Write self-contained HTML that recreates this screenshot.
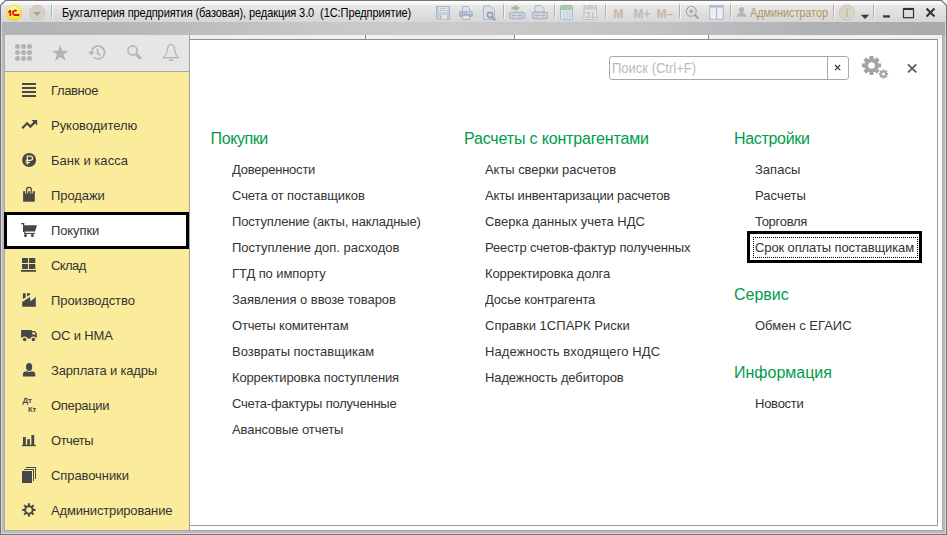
<!DOCTYPE html>
<html><head><meta charset="utf-8">
<style>
*{box-sizing:border-box;margin:0;padding:0}
html,body{width:947px;height:535px;overflow:hidden;background:#fff;font-family:"Liberation Sans",sans-serif}
.abs{position:absolute}
#frame{position:absolute;left:0;top:0;width:947px;height:535px;background:#747474;clip-path:polygon(5px 0,942px 0,947px 5px,947px 535px,0 535px,0 5px)}
#flight{position:absolute;left:1px;top:1px;width:945px;height:533px;background:#d8d8d8;clip-path:polygon(5px 0,940px 0,945px 5px,945px 533px,0 533px,0 5px)}
#fmid{position:absolute;left:2px;top:22px;width:943px;height:511px;background:#bbbbbd}
#title{position:absolute;left:1px;top:1px;width:945px;height:21px;clip-path:polygon(5px 0,940px 0,945px 5px,945px 21px,0 21px,0 5px);background:linear-gradient(#fdfdfd,#f8f8f8 2.5px,#e8e8e8 4.5px,#dfdfdf 12px,#d7d7d9)}
#band{position:absolute;left:2px;top:22px;width:943px;height:13px;background:linear-gradient(90deg,#b3b4b6 0,#b6b7b9 120px,#c8c8c9 330px,#cbcbcb 450px,#c4c4c6 640px,#b2b3b5 800px,#a9aaac 943px)}
#side{position:absolute;left:4px;top:35px;width:186px;height:496px;border-left:1px solid #a8a8ae;border-right:1px solid #a0a0a0;border-bottom:1px solid #a8a8aa;background:#fbec9c}
#sidehead{position:absolute;left:0;top:0;width:184px;height:37px;background:#e6e6e6;border-bottom:1px solid #a6a6a6}
#content{position:absolute;left:190px;top:35px;width:753px;height:496px;background:#fff;border-right:1px solid #a8a8a8;border-bottom:1px solid #a8a8aa}
#strip{position:absolute;left:0;top:0;width:752px;height:4px;background:#f0f0f0}
#cbox{position:absolute;left:0;top:4px;width:748px;height:487px;border-top:1px solid #8e8e8e;border-right:1px solid #9a9a9a;border-bottom:1px solid #9a9a9a;background:#fff}
.sep{position:absolute;top:0;width:1px;height:4px;background:#8a8a8a}
.si{position:absolute;left:0;width:184px;height:35px}
.si .t{position:absolute;left:46px;top:11px;font-size:13px;line-height:15px;color:#333;white-space:nowrap;transform:scaleY(1.05);transform-origin:0 12px}
.si svg{position:absolute;left:15px;top:9px}
.h{position:absolute;font-size:16px;line-height:18px;color:#009b4c;white-space:nowrap}
.it{position:absolute;font-size:13px;line-height:15px;color:#333;white-space:nowrap;transform:scaleY(1.05);transform-origin:0 12px}
</style></head><body>
<div id="frame"></div>
<div id="flight"></div>
<div id="fmid"></div>
<div id="title"></div>
<div id="band"></div>

<svg class="abs" style="left:0;top:0" width="947" height="22" viewBox="0 0 947 22">
 <defs>
  <radialGradient id="yel" cx="0.45" cy="0.3" r="0.75"><stop offset="0" stop-color="#ffffb0"/><stop offset="0.55" stop-color="#fff04a"/><stop offset="1" stop-color="#f2d200"/></radialGradient>
  <linearGradient id="sepg" x1="0" y1="0" x2="0" y2="1"><stop offset="0" stop-color="#a0a0a0" stop-opacity="0.2"/><stop offset="0.2" stop-color="#b0b0b0"/><stop offset="0.8" stop-color="#b0b0b0"/><stop offset="1" stop-color="#a0a0a0" stop-opacity="0.2"/></linearGradient>
 </defs>
 <!-- 1C logo -->
 <circle cx="14" cy="12.9" r="7.6" fill="url(#yel)" stroke="#e0cf5a" stroke-width="0.6"/>
  <path d="M8 11.6 L9.6 9.9 L11.2 9.9 L11.2 15.9 L9.4 15.9 L9.4 12.3 L8.4 12.9 Z" fill="#e4100e"/>
 <path d="M16.6 11.1 A2.25 2.25 0 1 0 14.7 15 L19.3 15" fill="none" stroke="#e4100e" stroke-width="1.85"/>
 <!-- dropdown circle -->
 <circle cx="37.1" cy="12.9" r="7.6" fill="#d6d0c4" stroke="#c6c0b3" stroke-width="0.7"/>
 <path d="M33.2 12 L40.8 12 L37 15.9 Z" fill="#a9a397"/>
 <!-- separators -->
 <g fill="url(#sepg)">
  <rect x="51" y="3" width="1" height="16"/>
  <rect x="503" y="3" width="1" height="16"/>
  <rect x="554" y="3" width="1" height="16"/>
  <rect x="605" y="3" width="1" height="16"/>
  <rect x="679" y="3" width="1" height="16"/>
  <rect x="730" y="3" width="1" height="16"/>
  <rect x="833" y="3" width="1" height="16"/>
  <rect x="873" y="3" width="1" height="16"/>
 </g>
 <g fill="#fafafa" opacity="0.8">
  <rect x="52" y="3" width="1" height="16"/><rect x="504" y="3" width="1" height="16"/><rect x="555" y="3" width="1" height="16"/><rect x="606" y="3" width="1" height="16"/><rect x="680" y="3" width="1" height="16"/><rect x="731" y="3" width="1" height="16"/><rect x="834" y="3" width="1" height="16"/><rect x="874" y="3" width="1" height="16"/>
 </g>
 <!-- save -->
 <g>
  <path d="M436.5 6.5 L449.5 6.5 L449.5 19.5 L437.5 19.5 L436.5 18.5 Z" fill="#c5cfda" stroke="#a9b6c6" stroke-width="1"/>
  <rect x="439" y="7" width="8" height="5" fill="#e6e8e6"/>
  <rect x="440" y="8.2" width="6" height="0.9" fill="#b0bccb"/>
  <rect x="440" y="10.1" width="6" height="0.9" fill="#b0bccb"/>
  <rect x="439" y="14.5" width="8" height="5" fill="#e2e8e0" stroke="#b8c4d0" stroke-width="0.6"/>
  <rect x="440" y="15.5" width="1.6" height="4" fill="#a9b6c6"/>
 </g>
 <!-- print -->
 <g>
  <path d="M462.5 6.5 L467.5 6.5 L469.5 8.5 L469.5 11.5 L462.5 11.5 Z" fill="#e2e2e2" stroke="#a9b7c8" stroke-width="1"/>
  <rect x="459" y="11" width="14" height="6" rx="1.5" fill="#a9b7c8"/>
  <rect x="460.5" y="12.5" width="11" height="1" fill="#bcc8d4"/>
  <rect x="467.6" y="12.2" width="1.2" height="1.2" fill="#eef2f6"/><rect x="469.8" y="12.2" width="1.2" height="1.2" fill="#eef2f6"/>
  <rect x="462.5" y="15.5" width="7" height="4" fill="#e2e2e2" stroke="#a9b7c8" stroke-width="1"/>
 </g>
 <!-- preview -->
 <g>
  <path d="M483.5 6 L490 6 L494.5 10 L494.5 19.5 L483.5 19.5 Z" fill="#e0e0e0" stroke="#a9b7c8" stroke-width="1"/>
  <circle cx="490" cy="15" r="2.6" fill="none" stroke="#8f9eb0" stroke-width="1.6"/>
  <path d="M492 17 L495.5 20.3" stroke="#8f9eb0" stroke-width="1.8"/>
 </g>
 <!-- chain with green arrow -->
 <g>
  <path d="M511.5 8 L516 8" stroke="#9fb79c" stroke-width="2.6"/><path d="M515 4.8 L520 8 L515 11.2 Z" fill="#9fb79c"/>
  <rect x="509.5" y="12.5" width="15" height="6" rx="2" fill="none" stroke="#a9b7c8" stroke-width="1.4"/>
  <rect x="511.5" y="14.5" width="3.5" height="2" fill="#a9b7c8"/>
  <rect x="519" y="14.5" width="3.5" height="2" fill="#a9b7c8"/>
  <rect x="515" y="15" width="4" height="1" fill="#a9b7c8"/>
 </g>
 <!-- doc printer -->
 <g>
  <path d="M535 5.5 L541 5.5 L544 8.5 L544 12 L535 12 Z" fill="#e0e0e0" stroke="#a9b7c8" stroke-width="1"/>
  <rect x="532.5" y="12.5" width="15" height="6" rx="2" fill="none" stroke="#a9b7c8" stroke-width="1.4"/>
  <rect x="534.5" y="14.5" width="3.5" height="2" fill="#a9b7c8"/>
  <rect x="542" y="14.5" width="3.5" height="2" fill="#a9b7c8"/>
  <rect x="538" y="15" width="4" height="1" fill="#a9b7c8"/>
 </g>
 <!-- calculator -->
 <g>
  <rect x="560.5" y="5.5" width="12" height="14" rx="1" fill="#dde4ea" stroke="#a9bccf" stroke-width="1"/>
  <rect x="561" y="6" width="11" height="4" fill="#abc9a4"/>
  <g fill="#b8c2cc"><rect x="563" y="11.5" width="1.5" height="1"/><rect x="566" y="11.5" width="1.5" height="1"/><rect x="569" y="11.5" width="1.5" height="1" fill="#d89a9a"/>
  <rect x="563" y="13.5" width="1.5" height="1"/><rect x="566" y="13.5" width="1.5" height="1"/><rect x="569" y="13.5" width="1.5" height="1"/>
  <rect x="563" y="15.5" width="1.5" height="1"/><rect x="566" y="15.5" width="1.5" height="1"/><rect x="569" y="15.5" width="1.5" height="2"/>
  <rect x="563" y="17.5" width="1.5" height="1"/><rect x="566" y="17.5" width="1.5" height="1"/></g>
 </g>
 <!-- calendar -->
 <g>
  <rect x="584" y="5.5" width="12.5" height="14" rx="1" fill="#e2e8ee" stroke="#b0c0d0" stroke-width="1"/>
  <rect x="584.3" y="5.5" width="12" height="4" fill="#d9c7b6"/>
  <rect x="586.5" y="4.8" width="1" height="2" fill="#f4f4f4"/><rect x="593.5" y="4.8" width="1" height="2" fill="#f4f4f4"/>
  <text x="590.3" y="18.2" font-family="Liberation Sans" font-size="9" fill="#a4acb4" text-anchor="middle">31</text>
 </g>
 <!-- M M+ M- -->
 <g font-family="Liberation Sans" font-weight="bold" font-size="12" fill="#c6b7a8">
  <text x="613.5" y="17.8">M</text>
  <text x="633.5" y="17.8">M+</text>
  <text x="656.5" y="17.8">M–</text>
 </g>
 <!-- zoom -->
 <g>
  <circle cx="691.3" cy="11.3" r="5" fill="none" stroke="#a3a3a3" stroke-width="1.1"/>
  <path d="M689 11.3 L693.6 11.3 M691.3 9 L691.3 13.6" stroke="#9a9a9a" stroke-width="1.1"/>
  <path d="M695 15 L698.6 18.6" stroke="#a3a3a3" stroke-width="2"/>
 </g>
 <!-- panel -->
 <g>
  <rect x="709.7" y="5.7" width="13.6" height="13.6" fill="#eceff2" stroke="#aabdd0" stroke-width="1.1"/>
  <rect x="710" y="6" width="13" height="1.6" fill="#aabdd0"/>
  <rect x="716" y="6" width="1.1" height="13" fill="#aabdd0"/>
 </g>
 <!-- user -->
 <g fill="#b4b4b4">
  <ellipse cx="741.6" cy="10" rx="2.6" ry="3"/>
  <path d="M736.8 16.8 C736.8 14 738.5 13 741.6 13 C744.7 13 746.4 14 746.4 16.8 Z"/>
 </g>
 <g transform="translate(750,16.7) scale(1,1.125)"><text x="0" y="0" font-family="Liberation Sans" font-size="11" letter-spacing="-0.1" fill="#b0965a">Администратор</text></g>
 <!-- info -->
 <circle cx="847" cy="12.7" r="7.7" fill="#dad4c7" stroke="#c8c2b2" stroke-width="0.8"/>
 <g fill="#bdbe9f">
  <circle cx="847.2" cy="9" r="1.05"/>
  <path d="M845.6 11.2 L848 11.2 L848 15.8 L848.9 15.8 L848.9 16.8 L845.6 16.8 L845.6 15.8 L846.4 15.8 L846.4 12.2 L845.6 12.2 Z"/>
 </g>
 <path d="M860.8 14.8 L869.2 14.8 L865 19 Z" fill="#3a3a3a"/>
 <!-- window controls -->
 <rect x="883" y="15.3" width="7" height="2.2" fill="#333"/>
 <rect x="903.5" y="8.5" width="10" height="9.2" fill="none" stroke="#333" stroke-width="1.2"/>
 <rect x="903" y="8" width="11" height="2" fill="#333"/>
 <path d="M926.5 8.5 L934.5 16.5 M934.5 8.5 L926.5 16.5" stroke="#333" stroke-width="2"/>
</svg>

<div class="abs" style="left:62px;top:6px;font-size:11px;line-height:13px;color:#000;letter-spacing:-0.076px;white-space:nowrap;transform:scaleY(1.125);transform-origin:0 2px">Бухгалтерия предприятия (базовая), редакция 3.0&nbsp; (1С:Предприятие)</div>

<div id="side">
  <div id="sidehead"></div>
</div>

<div id="content">
  <div id="strip"></div>
  <div class="abs" style="left:325px;top:0;width:193px;height:4px;background:#fff"></div>
  <div class="sep" style="left:175px"></div>
  <div class="sep" style="left:324px"></div>
  <div class="sep" style="left:518px"></div>
  <div id="cbox"></div>
</div>


<!-- search -->
<div class="abs" style="left:609px;top:56px;width:240px;height:24px;border:1px solid #a8a8a8;border-radius:3px;background:#fff"></div>
<div class="abs" style="left:827px;top:57px;width:1px;height:22px;background:#a8a8a8"></div>
<div class="abs" style="left:612px;top:61px;font-size:13px;line-height:15px;color:#bbbbbb;white-space:nowrap;transform:scaleY(1.06);transform-origin:0 12px">Поиск (Ctrl+F)</div>
<svg class="abs" style="left:820px;top:50px" width="120" height="35" viewBox="820 50 120 35">
 <path d="M835 65 L840.2 70.2 M840.2 65 L835 70.2" stroke="#333" stroke-width="1.2"/>
 <g transform="translate(871.5,65.5)" fill="#a4a4a4">
  <circle r="7.2"/>
  <g><rect x="-2" y="-9.5" width="4" height="19"/><rect x="-2" y="-9.5" width="4" height="19" transform="rotate(45)"/><rect x="-2" y="-9.5" width="4" height="19" transform="rotate(90)"/><rect x="-2" y="-9.5" width="4" height="19" transform="rotate(135)"/></g>
  <circle r="3.3" fill="#fff"/>
 </g>
 <g transform="translate(883.5,74)" fill="#a4a4a4">
  <circle r="3.4"/>
  <g><rect x="-1" y="-4.6" width="2" height="9.2"/><rect x="-1" y="-4.6" width="2" height="9.2" transform="rotate(45)"/><rect x="-1" y="-4.6" width="2" height="9.2" transform="rotate(90)"/><rect x="-1" y="-4.6" width="2" height="9.2" transform="rotate(135)"/></g>
  <circle r="1.6" fill="#fff"/>
 </g>
 <path d="M908 64.3 L916.3 72.3 M916.3 64.3 L908 72.3" stroke="#555" stroke-width="1.6"/>
</svg>

<!-- sidebar header icons -->
<svg class="abs" style="left:0;top:35px" width="190" height="37" viewBox="0 35 190 37">
 <g fill="#b3b3b3">
  <circle cx="17.5" cy="46.5" r="2.5"/><circle cx="23.5" cy="46.5" r="2.5"/><circle cx="29.5" cy="46.5" r="2.5"/>
  <circle cx="17.5" cy="52.5" r="2.5"/><circle cx="23.5" cy="52.5" r="2.5"/><circle cx="29.5" cy="52.5" r="2.5"/>
  <circle cx="17.5" cy="58.5" r="2.5"/><circle cx="23.5" cy="58.5" r="2.5"/><circle cx="29.5" cy="58.5" r="2.5"/>
  <path d="M60.3 44.8 L62.3 50.7 L68.5 50.7 L63.6 54.5 L65.6 61 L60.3 57 L55 61 L57 54.5 L52.1 50.7 L58.3 50.7 Z"/>
 </g>
 <g fill="none" stroke="#b3b3b3" stroke-width="1.6">
  <path d="M91.6 52.4 A6.5 6.5 0 1 1 93.5 57"/>
  <path d="M97.6 48.5 L97.6 53.5 L100.3 55.2"/>
  <circle cx="132.6" cy="50.5" r="4.6"/>
 </g>
 <path d="M88 51.8 L94.6 51.8 L91.3 55.6 Z" fill="#b3b3b3"/>
 <path d="M136.3 54.2 L140.8 58.7" stroke="#b3b3b3" stroke-width="3"/>
 <g fill="none" stroke="#b3b3b3" stroke-width="1.2">
  <path d="M171 44.4 C168.7 44.4 167.7 46.6 167.3 50 C166.9 53.4 166.1 55.4 163.8 57.5 L178.2 57.5 C175.9 55.4 175.1 53.4 174.7 50 C174.3 46.6 173.3 44.4 171 44.4 Z"/>
 </g>
 <rect x="163.2" y="57" width="15.6" height="1.3" fill="#b3b3b3"/>
 <path d="M168.4 59.4 L173.6 59.4 C173.3 60.6 172.4 61 171 61 C169.6 61 168.7 60.6 168.4 59.4 Z" fill="#b3b3b3"/>
</svg>

<!-- selected item box -->
<div class="abs" style="left:4px;top:212px;width:185px;height:37px;border:3px solid #000;background:#fff"></div>

<!-- sidebar icons -->
<svg class="abs" style="left:0;top:72px" width="190" height="458" viewBox="0 72 190 458">
 <g fill="#474747">
  <!-- hamburger -->
  <rect x="22" y="83" width="14" height="2"/><rect x="22" y="87" width="14" height="2"/><rect x="22" y="91" width="14" height="2"/><rect x="22" y="95" width="14" height="2"/>
  <!-- ruble -->
  <circle cx="29.1" cy="160" r="7"/>
  <!-- bag -->
  <path d="M23.1 191.2 L34.8 191.2 L34.8 201.7 L23.1 201.7 Z"/>
  <!-- cart -->
  <rect x="21.1" y="223" width="3" height="1.3"/>
  <rect x="23" y="223" width="1.2" height="9"/>
  <path d="M23 225.2 L37 225.2 L35 231.6 L23 231.6 Z"/>
  <rect x="24.2" y="231" width="1" height="2.5"/>
  <rect x="24.2" y="232.9" width="10.8" height="1.1"/>
  <circle cx="25.5" cy="235.5" r="1.5"/><circle cx="32.4" cy="235.5" r="1.5"/>
  <!-- warehouse -->
  <rect x="22" y="258" width="6" height="5"/><rect x="29" y="258" width="6.3" height="5"/>
  <rect x="22" y="264" width="6" height="5"/><rect x="29" y="264" width="6.3" height="5"/>
  <rect x="21" y="270" width="15" height="1.8"/>
  <!-- factory -->
  <path d="M22.2 306.8 L22.2 302 L29.8 297 L30.6 301.2 L35.8 297 L35.8 306.8 Z"/>
  <path d="M22.9 293.2 L25.7 293.2 L25.7 297.4 L22.9 299.1 Z"/><path d="M27 293.2 L30 293.2 L30 294.8 L27 296.6 Z"/>
  <!-- truck -->
  <path d="M21.1 330 L31.7 330 L31.7 331 L34.8 331 L36.8 333.2 L36.8 337.8 L21.1 337.8 Z"/>
  <rect x="27" y="337" width="4" height="1.6"/>
  <circle cx="24.6" cy="339.4" r="2.8" fill="#fbec9c"/><circle cx="33.4" cy="339.4" r="2.8" fill="#fbec9c"/>
  <circle cx="24.6" cy="339.4" r="1.75"/><circle cx="33.4" cy="339.4" r="1.75"/>
  <!-- person -->
  <path d="M22.9 376.6 L22.9 374.4 C22.9 372.2 24.3 371.3 26.8 371.3 L31.4 371.3 C33.9 371.3 35.3 372.2 35.3 374.4 L35.3 376.6 Z"/>
  <ellipse cx="29.1" cy="366.9" rx="3.1" ry="4" stroke="#fbec9c" stroke-width="2" paint-order="stroke"/>
  <!-- bars -->
  <rect x="23" y="437" width="2.8" height="8"/><rect x="27.2" y="439.2" width="2.7" height="5.8"/><rect x="31.4" y="435" width="2.8" height="10"/>
  <rect x="21.8" y="444.8" width="14" height="1.4"/>
  <!-- docs -->
  <rect x="22" y="471" width="10" height="12"/>
  <rect x="24" y="469" width="10" height="1"/><rect x="33" y="469" width="1" height="12"/>
  <rect x="26" y="467" width="10" height="1"/><rect x="35" y="467" width="1" height="12"/>
 </g>
 <!-- ruble sign -->
 <g fill="none" stroke="#fbec9c" stroke-width="1.3">
  <path d="M27.3 164.4 L27.3 156.2 L30.2 156.2 C31.8 156.2 32.6 157 32.6 158.3 C32.6 159.6 31.8 160.4 30.2 160.4 L25.6 160.4"/>
  <path d="M25.6 162.5 L30 162.5"/>
 </g>
 <!-- bag handle -->
 <path d="M26.6 193.6 L26.6 189.6 C26.6 188 27.5 187.4 28.95 187.4 C30.4 187.4 31.3 188 31.3 189.6 L31.3 193.6" fill="none" stroke="#fbec9c" stroke-width="2.9"/>
 <path d="M26.6 193.6 L26.6 189.6 C26.6 188 27.5 187.4 28.95 187.4 C30.4 187.4 31.3 188 31.3 189.6 L31.3 193.6" fill="none" stroke="#474747" stroke-width="1.25"/>
 <!-- trend -->
 <path d="M22.3 128.3 L27.1 123.3 L30.4 126.6 L34.6 122.4" fill="none" stroke="#474747" stroke-width="2.2"/>
 <path d="M31.5 120 L37.1 120 L37.1 125.6 Z" fill="#474747"/>
 <!-- truck window -->
 <path d="M32.3 332.3 L34.5 332.3 L35.7 334.6 L32.3 334.6 Z" fill="#fbec9c"/>
 <!-- Dt Kt -->
 <text x="22.4" y="403.2" font-family="Liberation Sans" font-weight="bold" font-size="8" fill="#474747">Дт</text>
 <text x="27.9" y="411.9" font-family="Liberation Sans" font-weight="bold" font-size="7.6" fill="#474747">Кт</text>
 <!-- gear -->
 <g transform="translate(28.9,509.9)">
  <g fill="#474747">
   <rect x="-1" y="-6.7" width="2" height="13.4"/>
   <rect x="-1" y="-6.7" width="2" height="13.4" transform="rotate(45)"/>
   <rect x="-1" y="-6.7" width="2" height="13.4" transform="rotate(90)"/>
   <rect x="-1" y="-6.7" width="2" height="13.4" transform="rotate(135)"/>
   <circle r="4.7"/>
  </g>
  <circle r="2.75" fill="#fbec9c"/>
 </g>
</svg>

<div class="si" style="left:5px;top:72px"><div class="t" style="letter-spacing:-0.383px">Главное</div></div>
<div class="si" style="left:5px;top:107px"><div class="t" style="letter-spacing:-0.035px">Руководителю</div></div>
<div class="si" style="left:5px;top:142px"><div class="t" style="letter-spacing:0.036px">Банк и касса</div></div>
<div class="si" style="left:5px;top:177px"><div class="t" style="letter-spacing:-0.083px">Продажи</div></div>
<div class="si" style="left:5px;top:212px"><div class="t" style="letter-spacing:-0.1px">Покупки</div></div>
<div class="si" style="left:5px;top:247px"><div class="t" style="letter-spacing:-0.6px">Склад</div></div>
<div class="si" style="left:5px;top:282px"><div class="t" style="letter-spacing:-0.077px">Производство</div></div>
<div class="si" style="left:5px;top:317px"><div class="t" style="letter-spacing:-0.13px">ОС и НМА</div></div>
<div class="si" style="left:5px;top:352px"><div class="t" style="letter-spacing:-0.18px">Зарплата и кадры</div></div>
<div class="si" style="left:5px;top:387px"><div class="t" style="letter-spacing:-0.333px">Операции</div></div>
<div class="si" style="left:5px;top:422px"><div class="t" style="letter-spacing:-0.48px">Отчеты</div></div>
<div class="si" style="left:5px;top:457px"><div class="t" style="letter-spacing:-0.08px">Справочники</div></div>
<div class="si" style="left:5px;top:492px"><div class="t" style="letter-spacing:-0.156px">Администрирование</div></div>

<!-- content texts -->
<div class="h" style="left:210.6px;top:130px;letter-spacing:-0.42px">Покупки</div>
<div class="it" style="left:232px;top:162px;letter-spacing:-0.234px">Доверенности</div>
<div class="it" style="left:232px;top:188px;letter-spacing:-0.095px">Счета от поставщиков</div>
<div class="it" style="left:232px;top:214px;letter-spacing:-0.164px">Поступление (акты, накладные)</div>
<div class="it" style="left:232px;top:240px;letter-spacing:-0.021px">Поступление доп. расходов</div>
<div class="it" style="left:232px;top:266px;letter-spacing:-0.077px">ГТД по импорту</div>
<div class="it" style="left:232px;top:292px;letter-spacing:-0.058px">Заявления о ввозе товаров</div>
<div class="it" style="left:232px;top:318px;letter-spacing:-0.215px">Отчеты комитентам</div>
<div class="it" style="left:232px;top:344px;letter-spacing:-0.016px">Возвраты поставщикам</div>
<div class="it" style="left:232px;top:370px;letter-spacing:-0.139px">Корректировка поступления</div>
<div class="it" style="left:232px;top:396px;letter-spacing:-0.211px">Счета-фактуры полученные</div>
<div class="it" style="left:232px;top:422px;letter-spacing:-0.08px">Авансовые отчеты</div>

<div class="h" style="left:464px;top:130px;letter-spacing:-0.164px">Расчеты с контрагентами</div>
<div class="it" style="left:485px;top:162px;letter-spacing:-0.052px">Акты сверки расчетов</div>
<div class="it" style="left:485px;top:188px;letter-spacing:-0.163px">Акты инвентаризации расчетов</div>
<div class="it" style="left:485px;top:214px;letter-spacing:-0.02px">Сверка данных учета НДС</div>
<div class="it" style="left:485px;top:240px;letter-spacing:-0.127px">Реестр счетов-фактур полученных</div>
<div class="it" style="left:485px;top:266px;letter-spacing:-0.133px">Корректировка долга</div>
<div class="it" style="left:485px;top:292px;letter-spacing:-0.16px">Досье контрагента</div>
<div class="it" style="left:485px;top:318px;letter-spacing:0.031px">Справки 1СПАРК Риски</div>
<div class="it" style="left:485px;top:344px;letter-spacing:0.103px">Надежность входящего НДС</div>
<div class="it" style="left:485px;top:370px;letter-spacing:-0.121px">Надежность дебиторов</div>

<div class="h" style="left:734px;top:130px;letter-spacing:-0.325px">Настройки</div>
<div class="it" style="left:755px;top:162px;letter-spacing:0.02px">Запасы</div>
<div class="it" style="left:755px;top:188px;letter-spacing:0.037px">Расчеты</div>
<div class="it" style="left:755px;top:214px;letter-spacing:-0.271px">Торговля</div>
<div class="abs" style="left:747px;top:231px;width:175px;height:32px;border:3px solid #000"></div>
<div class="abs" style="left:753px;top:237px;width:165px;height:21px;border:1px dotted #000"></div>
<div class="it" style="left:755px;top:240px;letter-spacing:-0.116px">Срок оплаты поставщикам</div>

<div class="h" style="left:734px;top:286px">Сервис</div>
<div class="it" style="left:755px;top:318px;letter-spacing:-0.003px">Обмен с ЕГАИС</div>
<div class="h" style="left:734px;top:364px">Информация</div>
<div class="it" style="left:755px;top:396px;letter-spacing:-0.25px">Новости</div>

</body></html>
